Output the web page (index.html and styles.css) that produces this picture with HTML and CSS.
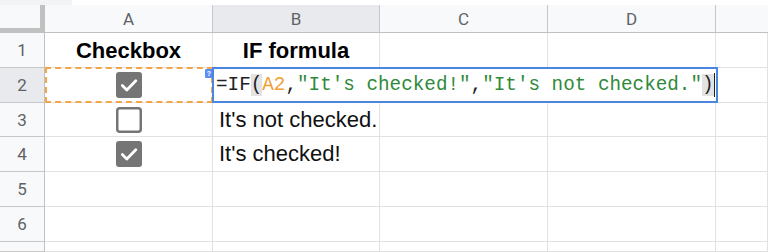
FILE: index.html
```html
<!DOCTYPE html>
<html lang="en">
<head>
    <meta charset="UTF-8">
    <meta name="viewport" content="width=device-width, initial-scale=1.0">
    <title>Checkbox IF formula</title>
    <link rel="stylesheet" href="styles.css">
</head>
<body>
    <div class="topstrip">
        <div class="topstrip-left"></div>
    </div>
    <div class="sheet">
        <!-- column headers -->
        <div class="corner"></div>
        <div class="colhead">A</div>
        <div class="colhead active">B</div>
        <div class="colhead">C</div>
        <div class="colhead">D</div>
        <div class="colhead last"></div>

        <!-- row 1 -->
        <div class="rowhead">1</div>
        <div class="cell center bold">Checkbox</div>
        <div class="cell center bold">IF formula</div>
        <div class="cell"></div>
        <div class="cell"></div>
        <div class="cell"></div>

        <!-- row 2 -->
        <div class="rowhead active">2</div>
        <div class="cell center ref">
            <svg class="box" width="26" height="26" viewBox="0 0 26 26">
                <rect x="0" y="0" width="26" height="26" rx="3" fill="#757575"/>
                <path d="M6.3 13.6 L10.8 18 L19.8 8.8" fill="none" stroke="#fff" stroke-width="2.8" stroke-linecap="round" stroke-linejoin="round"/>
            </svg>
            <span class="ref-outline"></span>
        </div>
        <div class="cell editing">
            <span class="hint">?</span>
            <div class="editor">=IF<span class="paren">(</span><span class="f-ref">A2</span>,<span class="f-str">"It's checked!"</span>,<span class="f-str">"It's not checked."</span><span class="paren">)</span><span class="caret"></span></div>
        </div>
        <div class="cell"></div>
        <div class="cell"></div>
        <div class="cell"></div>

        <!-- row 3 -->
        <div class="rowhead">3</div>
        <div class="cell center">
            <svg class="box" width="26" height="26" viewBox="0 0 26 26">
                <rect x="1.25" y="1.25" width="23.5" height="23.5" rx="2.5" fill="#fff" stroke="#757575" stroke-width="2.5"/>
            </svg>
        </div>
        <div class="cell text">It's not checked.</div>
        <div class="cell"></div>
        <div class="cell"></div>
        <div class="cell"></div>

        <!-- row 4 -->
        <div class="rowhead">4</div>
        <div class="cell center">
            <svg class="box" width="26" height="26" viewBox="0 0 26 26">
                <rect x="0" y="0" width="26" height="26" rx="3" fill="#757575"/>
                <path d="M6.3 13.6 L10.8 18 L19.8 8.8" fill="none" stroke="#fff" stroke-width="2.8" stroke-linecap="round" stroke-linejoin="round"/>
            </svg>
        </div>
        <div class="cell text">It's checked!</div>
        <div class="cell"></div>
        <div class="cell"></div>
        <div class="cell"></div>

        <!-- row 5 -->
        <div class="rowhead">5</div>
        <div class="cell"></div>
        <div class="cell"></div>
        <div class="cell"></div>
        <div class="cell"></div>
        <div class="cell"></div>

        <!-- row 6 -->
        <div class="rowhead">6</div>
        <div class="cell"></div>
        <div class="cell"></div>
        <div class="cell"></div>
        <div class="cell"></div>
        <div class="cell"></div>

        <!-- row 7 -->
        <div class="rowhead"></div>
        <div class="cell"></div>
        <div class="cell"></div>
        <div class="cell"></div>
        <div class="cell"></div>
        <div class="cell"></div>
    </div>
</body>
</html>
```

FILE: styles.css
```css
* {
    box-sizing: border-box;
}
html, body {
    margin: 0;
    padding: 0;
    background: #fff;
    overflow: hidden;
}
body {
    width: 768px;
    height: 252px;
    font-family: "Liberation Sans", Arial, sans-serif;
    color: #000;
}
.topstrip {
    height: 5px;
    display: flex;
    background: #fff;
}
.topstrip-left {
    width: 72px;
    background: #f1f3f4;
}
.sheet {
    display: grid;
    grid-template-columns: 45px 168px 167px 168px 168px 1fr;
    grid-template-rows: 28px 35px 35px 34px 35px 35px 35px 10px;
}
.corner {
    background: #f8f9fa;
    border-right: 5px solid #c0c0c0;
    border-bottom: 5px solid #c0c0c0;
}
.colhead {
    background: #f8f9fa;
    border-right: 1px solid #c7c7c7;
    border-bottom: 1px solid #c0c0c0;
    display: flex;
    align-items: center;
    justify-content: center;
    font-family: Roboto, "Liberation Sans", sans-serif;
    font-size: 17px;
    color: #5f6368;
    padding-top: 1px;
}
.colhead.last {
    border-right: none;
}
.colhead.active,
.rowhead.active {
    background: #e8eaed;
}
.rowhead {
    background: #f8f9fa;
    border-right: 1px solid #c0c0c0;
    border-bottom: 1px solid #c7c7c7;
    display: flex;
    align-items: center;
    justify-content: center;
    font-family: Roboto, "Liberation Sans", sans-serif;
    font-size: 17px;
    color: #5f6368;
}
.cell {
    position: relative;
    border-right: 1px solid #e2e2e2;
    border-bottom: 1px solid #e2e2e2;
    display: flex;
    align-items: center;
    font-size: 22px;
}
.cell.center {
    justify-content: center;
}
.cell.bold {
    font-weight: bold;
    padding-top: 1px;
}
.cell.text {
    padding-left: 6px;
    color: #111;
}
.box {
    display: block;
}
.ref-outline {
    position: absolute;
    left: 0;
    top: -1px;
    right: -1px;
    bottom: -1px;
    border: 2px dashed #f2a649;
}
.editing {
    z-index: 2;
}
.editor {
    position: absolute;
    left: -1px;
    top: -1px;
    width: 506px;
    height: 36px;
    background: #fff;
    border: 2px solid #4a86e0;
    display: flex;
    align-items: center;
    padding-left: 2px;
    font-family: "Liberation Mono", "DejaVu Sans Mono", monospace;
    font-size: 19.3px;
    color: #202124;
    white-space: pre;
}
.paren {
    background: #e3e3e3;
}
.f-ref {
    color: #f0a135;
}
.f-str {
    color: #2f8a3a;
}
.caret {
    display: inline-block;
    width: 1.5px;
    height: 24px;
    background: #202124;
}
.hint {
    position: absolute;
    left: -8px;
    top: 1px;
    width: 8px;
    height: 9px;
    background: #5b8ef2;
    color: #fff;
    font-size: 7px;
    font-weight: bold;
    line-height: 9px;
    text-align: center;
    border-radius: 1px;
}
```
